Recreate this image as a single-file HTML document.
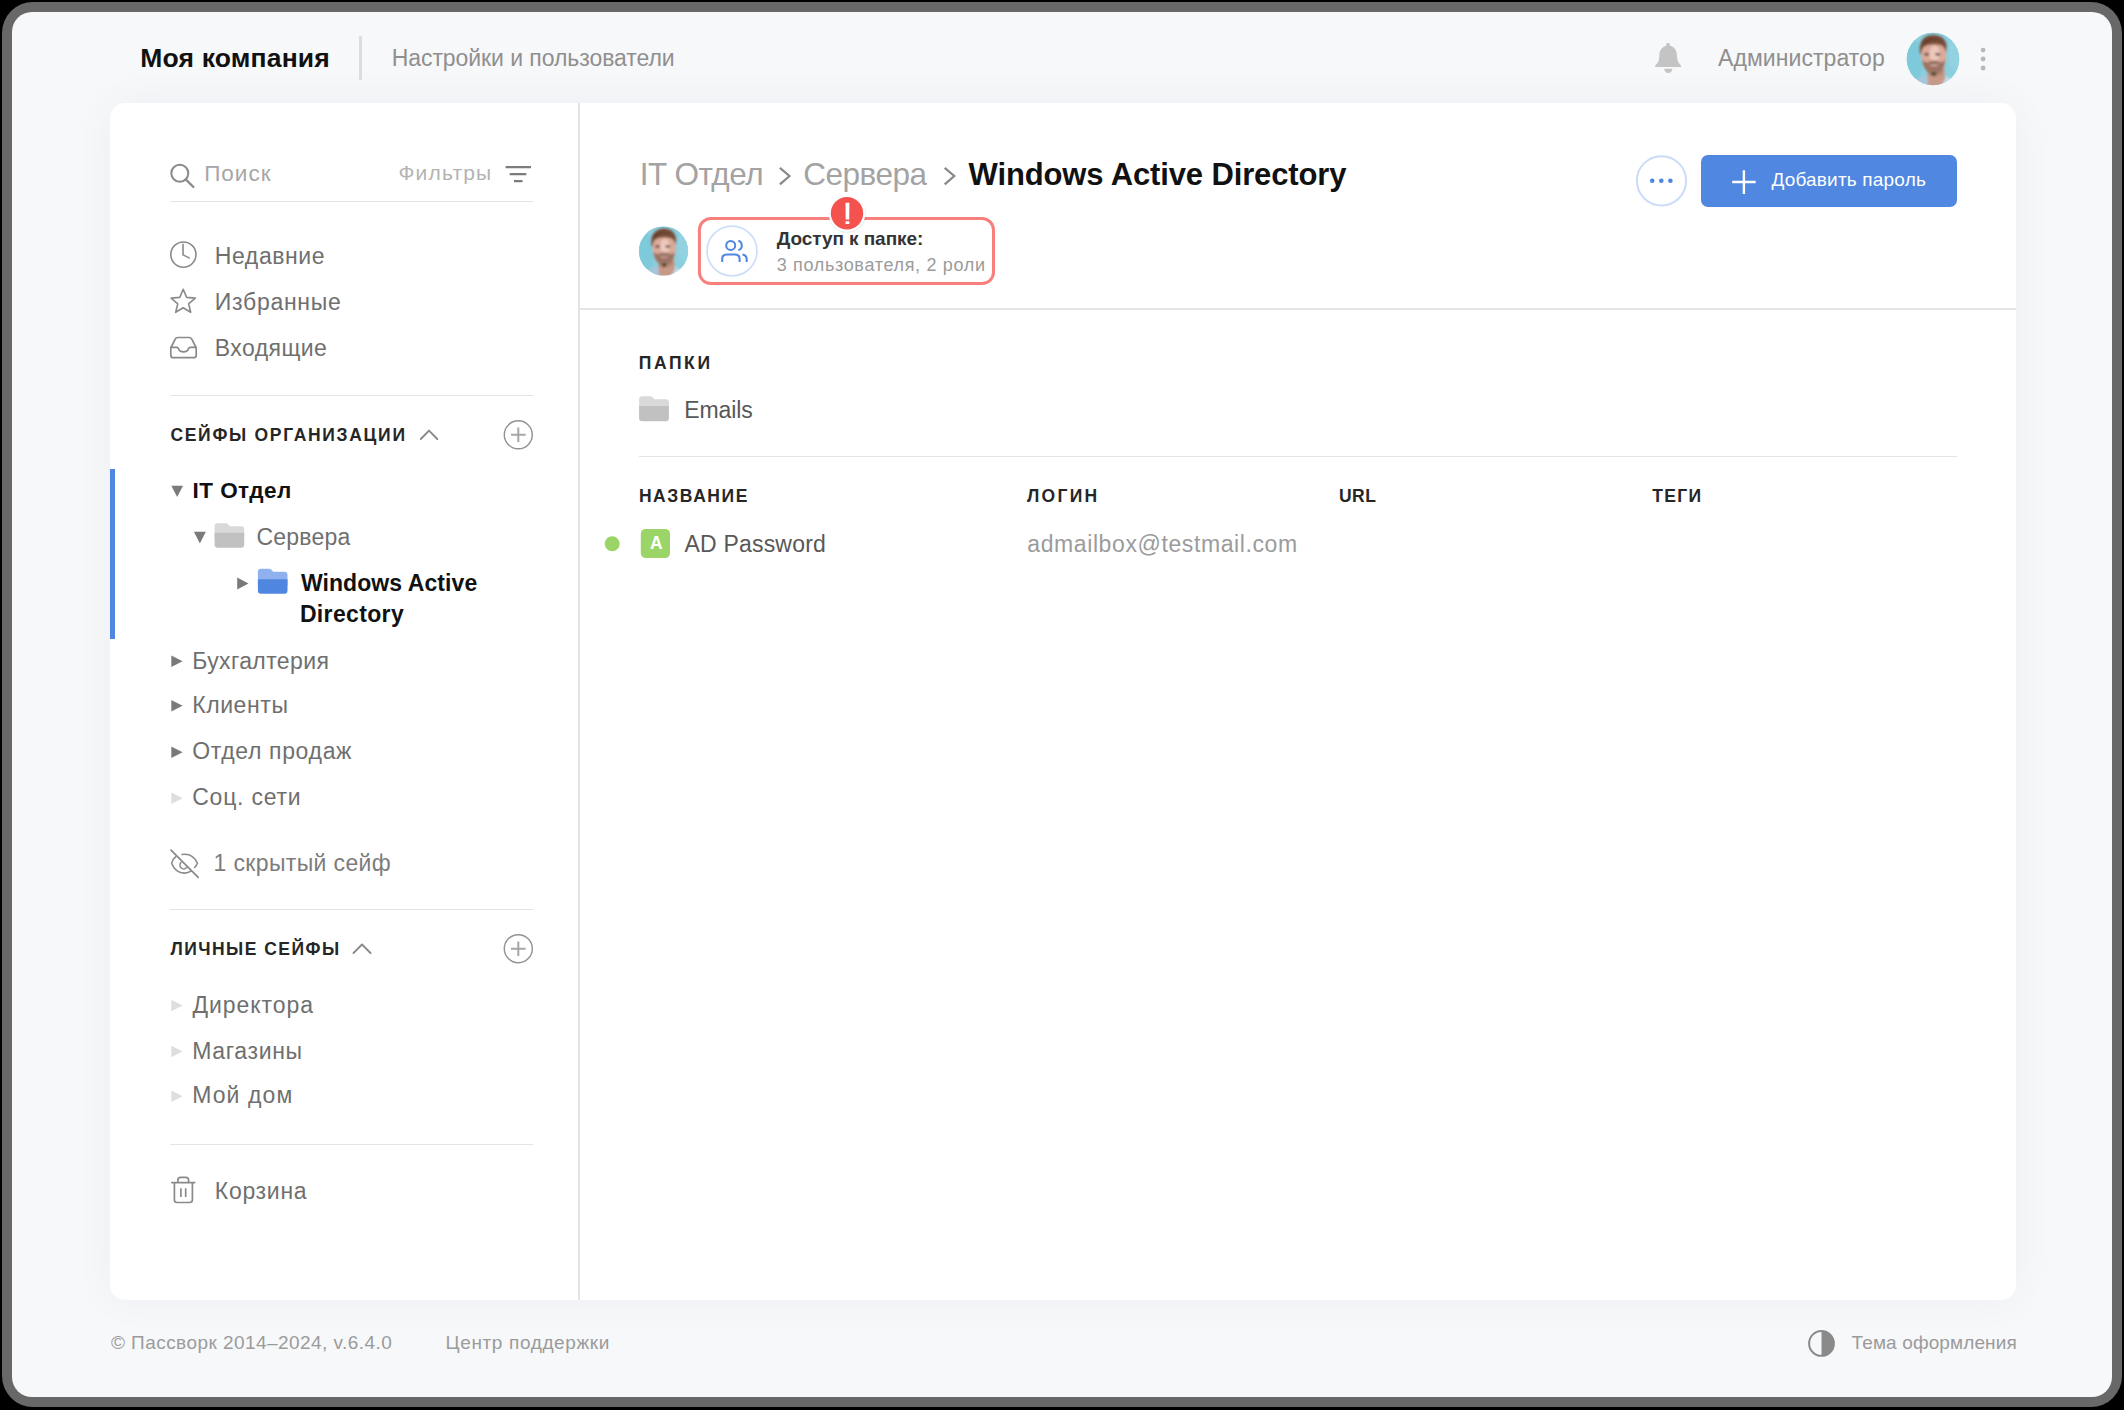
<!DOCTYPE html>
<html lang="ru">
<head>
<meta charset="utf-8">
<title>Пассворк</title>
<style>
*{box-sizing:border-box;margin:0;padding:0}
html,body{width:2124px;height:1410px;overflow:hidden;background:#000}
body{font-family:"Liberation Sans",sans-serif;position:relative;color:#111}
.abs{position:absolute;white-space:nowrap;line-height:1}
#frame{position:absolute;left:2px;top:2px;width:2120px;height:1405px;background:#686868;border-radius:31px}
#screen{position:absolute;left:12px;top:12px;width:2100px;height:1385px;background:#f7f8fa;border-radius:20px}
#card{position:absolute;left:110px;top:103px;width:1906px;height:1197px;background:#fff;border-radius:15px;box-shadow:0 0 42px rgba(50,55,75,.045)}
.ln{position:absolute;background:#e4e4e5}
#ico{position:absolute;left:0;top:0;width:2124px;height:1410px;overflow:visible}
</style>
</head>
<body>
<div id="frame"></div>
<div id="screen"></div>
<div id="card"></div>

<!-- lines -->
<div class="ln" style="left:359px;top:36px;width:2.5px;height:44px;background:#dddde0"></div>
<div class="ln" style="left:578.2px;top:103px;width:1.6px;height:1197px"></div>
<div class="ln" style="left:579px;top:308.3px;width:1437px;height:1.7px"></div>
<div class="ln" style="left:170px;top:200.8px;width:363px;height:1.5px"></div>
<div class="ln" style="left:170px;top:394.8px;width:363px;height:1.5px"></div>
<div class="ln" style="left:170px;top:908.8px;width:363px;height:1.5px"></div>
<div class="ln" style="left:170px;top:1143.6px;width:363px;height:1.5px"></div>
<div class="ln" style="left:639px;top:455.7px;width:1318.3px;height:1.5px"></div>
<div class="ln" style="left:110px;top:469.3px;width:4.8px;height:169.5px;background:#4f86e0"></div>

<svg id="ico" viewBox="0 0 2124 1410">
<defs>
  <clipPath id="avc"><circle cx="50" cy="50" r="50"/></clipPath>
  <filter id="avb" x="-10%" y="-10%" width="120%" height="120%"><feGaussianBlur stdDeviation="1.800"/></filter>
  </defs>

<!-- header icons -->
<path fill="#c4c4c4" d="M1668.100 43C1666.900 43 1666.200 43.900 1666.200 45V45.700C1662 46.800 1659.400 50.300 1659.400 54.800L1659 59C1658.600 62 1657 64 1655.200 65.600V66.900H1681.100V65.600C1679.300 64 1677.700 62 1677.300 59L1676.900 54.800C1676.900 50.300 1674.300 46.800 1670.100 45.700V45C1670.100 43.900 1669.300 43 1668.100 43Z"/>
<path fill="#c4c4c4" d="M1664.200 68.800H1672.400A4.100 4.200 0 0 1 1664.200 68.800Z"/>
<g transform="translate(1906.700 32.700) scale(.526)"><g clip-path="url(#avc)">
    <rect width="100" height="100" fill="#8bcfde"/>
    <g filter="url(#avb)">
    <rect x="-10" y="-10" width="120" height="120" fill="#8bcfde"/>
    <ellipse cx="12" cy="55" rx="18" ry="42" fill="#7ecadb"/>
    <ellipse cx="92" cy="40" rx="14" ry="30" fill="#93d2e0"/>
    <path d="M10 106L20 88Q30 80 42 84L43 106Z" fill="#a7c5db"/>
    <path d="M60 106L66 83Q78 81 86 92L92 106Z" fill="#c8ddec"/>
    <path d="M39 66H72L73 88Q68 99 62 106H41Z" fill="#c89986"/>
    <path d="M40 80Q52 90 70 78L71 70H40Z" fill="#b98a78"/>
    <path d="M27 30Q27 19 50 18Q74 19 75 31V50Q74 66 63 76Q52 84 43 77Q30 68 28 50Z" fill="#dba998"/>
    <ellipse cx="53" cy="40" rx="10" ry="15" fill="#ecccbf" opacity=".9"/>
    <path d="M25 40Q21 14 38 6Q52 0 66 7Q80 15 75 38Q73 27 65 24Q50 19 36 25Q28 29 27 42Z" fill="#7a4f38"/>
    <path d="M31 19Q50 3 71 18Q58 11 47 14Q38 16 31 24Z" fill="#553423"/>
    <path d="M29 52Q31 70 43 78Q52 85 63 76Q73 67 73 52Q69 58 62 55Q52 51 42 55Q34 58 29 52Z" fill="#9a7563"/>
    <path d="M39 61Q52 72 65 60Q52 66 39 61Z" fill="#b0605f"/>
    <path d="M42 61Q52 66 62 60.500Q52 63 42 61Z" fill="#f2e6e2"/>
    <ellipse cx="51.500" cy="78.500" rx="4.500" ry="4" fill="#594433"/>
    <ellipse cx="38" cy="41" rx="5" ry="2.600" fill="#5f464e"/>
    <ellipse cx="59" cy="41" rx="5" ry="2.600" fill="#5f464e"/>
    </g>
  </g></g>
<g fill="#b8b8b8"><circle cx="1983.100" cy="50.100" r="2.400"/><circle cx="1983.100" cy="59" r="2.400"/><circle cx="1983.100" cy="68" r="2.400"/></g>

<!-- sidebar icons -->
<g fill="none" stroke="#8a8a8a" stroke-width="1.800" stroke-linecap="round" stroke-linejoin="round">
  <circle cx="179.800" cy="173.200" r="8.500" stroke-width="2"/>
  <path d="M186 179.600L193.400 187" stroke-width="2.300"/>
  <g stroke="#7c7c7c" stroke-width="2.200" stroke-linecap="butt"><path d="M505.600 167.200H531M509.700 174.200H526.300M514 181.200H522.500"/></g>
  <!-- clock -->
  <circle cx="183.400" cy="254.600" r="12.600" stroke-width="1.600"/>
  <path d="M183 244.300V254.900L189.200 257.900" stroke-width="1.600"/>
  <!-- star -->
  <path stroke-width="1.600" d="M183.2 289.3 186.6 297.4 195.3 298.1 188.6 303.8 190.7 312.3 183.2 307.7 175.7 312.3 177.8 303.8 171.1 298.1 179.8 297.4Z"/>
  <!-- inbox -->
  <path stroke-width="1.700" d="M170.800 348L175.200 339.200Q176 337.500 177.800 337.500H189.200Q191 337.500 191.800 339.200L196.200 348V355.200Q196.200 357.700 193.700 357.700H173.300Q170.800 357.700 170.800 355.200Z"/>
  <path stroke-width="1.700" d="M170.800 347.300H176.800Q178 347.300 178.400 348.600Q179.400 351.900 183.500 351.900Q187.600 351.900 188.600 348.600Q189 347.300 190.200 347.300H196.200"/>
  <!-- section chevrons -->
  <path d="M420.800 439L429 430.600 437.300 439" stroke-width="1.900"/>
  <path d="M353.500 953L362 944.500 370.500 953" stroke-width="1.900"/>
  <!-- plus circles -->
  <circle cx="518.300" cy="434.800" r="14" stroke-width="1.400" stroke="#929292"/>
  <path d="M511 434.800H525.600M518.300 427.500V442.100" stroke-width="2" stroke="#a6a6a6" stroke-linecap="butt"/>
  <circle cx="518.300" cy="948.700" r="14" stroke-width="1.400" stroke="#929292"/>
  <path d="M511 948.700H525.600M518.300 941.400V956" stroke-width="2" stroke="#a6a6a6" stroke-linecap="butt"/>
  <!-- eye slash -->
  <path stroke-width="1.600" d="M175.800 856.700C173.500 858.500 172 860.800 171.600 863.300C174 869.500 178.800 873.100 184.500 873.100C187 873.100 189.300 872.300 191.300 870.800"/>
  <path stroke-width="1.600" d="M182.100 854.500C183 854.300 183.900 854.200 184.800 854.200C190.500 854.200 195.200 858 197.400 863.300C196.800 864.900 195.800 866.300 194.600 867.500"/>
  <path stroke-width="1.600" d="M180.900 862.600A3.500 3.500 0 0 0 186.700 867.600"/>
  <path d="M171 850.100L198.200 877.300" stroke-width="1.700"/>
  <!-- trash -->
  <path stroke-width="1.700" d="M171.800 1182.600H194.700M177.900 1182.600V1180.200Q177.900 1177.400 180.700 1177.400H185.800Q188.600 1177.400 188.600 1180.200V1182.600M174.400 1182.600V1199.800Q174.400 1202.500 177.100 1202.500H189.700Q192.400 1202.500 192.400 1199.800V1182.600"/>
  <path stroke-width="1.700" stroke-linecap="butt" d="M180.900 1188.300V1196.900M185.700 1188.300V1196.900" stroke-linecap="round"/>
  <!-- breadcrumb chevrons -->
  <path d="M779.900 167.800L789.400 176 779.900 184.300" stroke-width="2.300" stroke-linecap="butt" stroke-linejoin="miter"/>
  <path d="M944.700 167.800L954.200 176 944.700 184.300" stroke-width="2.300" stroke-linecap="butt" stroke-linejoin="miter"/>
</g>

<!-- triangles -->
<g fill="#7a7a7a">
  <path d="M171.300 485.700H183L177.200 497Z"/>
  <path d="M193.900 531.700H205.800L199.900 543.500Z"/>
  <path d="M237.200 577.400L248.500 583.400 237.200 589.500Z"/>
  <path d="M171.300 655.500L182.600 661.200 171.300 666.900Z"/>
  <path d="M171.300 700L182.600 705.700 171.300 711.400Z"/>
  <path d="M171.300 746.600L182.600 752.300 171.300 758Z"/>
</g>
<g fill="#dedede">
  <path d="M171.300 792.500L182.600 798.200 171.300 803.900Z"/>
  <path d="M171.300 999.800L182.600 1005.500 171.300 1011.200Z"/>
  <path d="M171.300 1045.800L182.600 1051.500 171.300 1057.200Z"/>
  <path d="M171.300 1090.600L182.600 1096.300 171.300 1102Z"/>
</g>

<!-- folders -->
<g id="fold_gray1">
  <path fill="#d9d9d9" d="M214.600 526.200Q214.600 523.200 217.600 523.200H225.600Q227.300 523.200 228.300 524.400L229.900 526.200H241.200Q244.200 526.200 244.200 529.200V540H214.600Z"/>
  <path fill="#c1c1c1" d="M214.600 532.700H244.200V544.700Q244.200 547.700 241.200 547.700H217.600Q214.600 547.700 214.600 544.700Z"/>
</g>
<g id="fold_blue">
  <path fill="#8fb2ef" d="M257.900 571.800Q257.900 568.800 260.900 568.800H268.900Q270.600 568.800 271.600 570L273.200 571.800H284.500Q287.500 571.800 287.500 574.800V586H257.900Z"/>
  <path fill="#4f86e0" d="M257.900 579.300H287.500V590.800Q287.500 593.800 284.500 593.800H260.900Q257.900 593.800 257.900 590.800Z"/>
</g>
<g id="fold_gray2">
  <path fill="#d9d9d9" d="M639.100 399.300Q639.100 396.300 642.100 396.300H650.100Q651.800 396.300 652.800 397.500L654.400 399.300H665.900Q668.900 399.300 668.900 402.300V414H639.100Z"/>
  <path fill="#c1c1c1" d="M639.100 406H668.900V418.200Q668.900 421.200 665.900 421.200H642.100Q639.100 421.200 639.100 418.200Z"/>
</g>

<!-- main: actions -->
<circle cx="1661.500" cy="180.800" r="24.600" fill="#fff" stroke="#c9dcf8" stroke-width="2"/>
<g fill="#4f86e0"><circle cx="1652.200" cy="180.800" r="2.300"/><circle cx="1661.300" cy="180.800" r="2.300"/><circle cx="1670.400" cy="180.800" r="2.300"/></g>
<rect x="1701" y="155" width="256" height="52" rx="7" fill="#4f87e1"/>
<path d="M1732.200 182H1755.600M1743.900 170.200V193.900" stroke="#fff" stroke-width="2.400" fill="none"/>

<!-- access -->
<g transform="translate(639 226.500) scale(.49)"><g clip-path="url(#avc)">
    <rect width="100" height="100" fill="#8bcfde"/>
    <g filter="url(#avb)">
    <rect x="-10" y="-10" width="120" height="120" fill="#8bcfde"/>
    <ellipse cx="12" cy="55" rx="18" ry="42" fill="#7ecadb"/>
    <ellipse cx="92" cy="40" rx="14" ry="30" fill="#93d2e0"/>
    <path d="M10 106L20 88Q30 80 42 84L43 106Z" fill="#a7c5db"/>
    <path d="M60 106L66 83Q78 81 86 92L92 106Z" fill="#c8ddec"/>
    <path d="M39 66H72L73 88Q68 99 62 106H41Z" fill="#c89986"/>
    <path d="M40 80Q52 90 70 78L71 70H40Z" fill="#b98a78"/>
    <path d="M27 30Q27 19 50 18Q74 19 75 31V50Q74 66 63 76Q52 84 43 77Q30 68 28 50Z" fill="#dba998"/>
    <ellipse cx="53" cy="40" rx="10" ry="15" fill="#ecccbf" opacity=".9"/>
    <path d="M25 40Q21 14 38 6Q52 0 66 7Q80 15 75 38Q73 27 65 24Q50 19 36 25Q28 29 27 42Z" fill="#7a4f38"/>
    <path d="M31 19Q50 3 71 18Q58 11 47 14Q38 16 31 24Z" fill="#553423"/>
    <path d="M29 52Q31 70 43 78Q52 85 63 76Q73 67 73 52Q69 58 62 55Q52 51 42 55Q34 58 29 52Z" fill="#9a7563"/>
    <path d="M39 61Q52 72 65 60Q52 66 39 61Z" fill="#b0605f"/>
    <path d="M42 61Q52 66 62 60.500Q52 63 42 61Z" fill="#f2e6e2"/>
    <ellipse cx="51.500" cy="78.500" rx="4.500" ry="4" fill="#594433"/>
    <ellipse cx="38" cy="41" rx="5" ry="2.600" fill="#5f464e"/>
    <ellipse cx="59" cy="41" rx="5" ry="2.600" fill="#5f464e"/>
    </g>
  </g></g>
<rect x="699.400" y="218.500" width="294.100" height="65.100" rx="11.500" fill="#fff" stroke="#f7807d" stroke-width="3"/>
<circle cx="732" cy="250.950" r="24.900" fill="#fff" stroke="#cddff8" stroke-width="1.700"/>
<g fill="none" stroke="#4f86e0" stroke-width="2" stroke-linecap="butt">
  <circle cx="730.700" cy="245.400" r="4.500"/>
  <path d="M722.200 262V259Q722.200 254.400 726.800 254.400H735Q739.600 254.400 739.600 259V262"/>
  <path d="M738.300 240.700A4.900 4.900 0 0 1 738.300 250.100"/>
  <path d="M742.500 254.500Q746.700 255.200 746.700 259.500V262"/>
</g>
<circle cx="847.300" cy="214.200" r="18.800" fill="#000" opacity=".07"/>
<circle cx="847" cy="213.300" r="18.400" fill="#fff"/>
<circle cx="847" cy="213.300" r="16.200" fill="#f4524e"/>
<path fill="#fff" d="M845.500 202.800h3.900l-.2 16.600h-3.500zM845.500 221.300h3.900v2.800h-3.900z"/>

<!-- table -->
<circle cx="612.200" cy="543.800" r="7.500" fill="#9bd567"/>
<rect x="640.800" y="528.900" width="29.200" height="29.200" rx="5" fill="#9bd567"/>

<!-- footer -->
<circle cx="1821.500" cy="1343.400" r="12.400" fill="none" stroke="#8a8a8a" stroke-width="2"/>
<path fill="#8a8a8a" d="M1821.500 1331A12.400 12.400 0 0 1 1821.500 1355.800Z"/>
</svg>

<div class="abs" id="h_company" style="left:140.30px;top:45px;font-size:26.5px;color:#111;letter-spacing:0.170px;font-weight:bold;">Моя компания</div>
<div class="abs" id="h_settings" style="left:391.70px;top:47px;font-size:23px;color:#8f8f8f;letter-spacing:-0.065px;">Настройки и пользователи</div>
<div class="abs" id="h_admin" style="left:1718.10px;top:47px;font-size:23px;color:#8f8f8f;letter-spacing:0.054px;">Администратор</div>
<div class="abs" id="s_search" style="left:204.20px;top:163px;font-size:22.5px;color:#a6a6a6;letter-spacing:0.999px;">Поиск</div>
<div class="abs" id="s_filters" style="left:398.50px;top:162px;font-size:21px;color:#b3b3b3;letter-spacing:1.159px;">Фильтры</div>
<div class="abs" id="s_recent" style="left:214.80px;top:245px;font-size:23px;color:#6f6f6f;letter-spacing:0.589px;">Недавние</div>
<div class="abs" id="s_fav" style="left:214.80px;top:291px;font-size:23px;color:#6f6f6f;letter-spacing:0.711px;">Избранные</div>
<div class="abs" id="s_inbox" style="left:214.80px;top:337px;font-size:23px;color:#6f6f6f;letter-spacing:0.421px;">Входящие</div>
<div class="abs" id="s_org" style="left:170.40px;top:427px;font-size:17.5px;color:#262626;letter-spacing:1.704px;font-weight:bold;">СЕЙФЫ ОРГАНИЗАЦИИ</div>
<div class="abs" id="s_it" style="left:192.50px;top:480px;font-size:22.5px;color:#111;letter-spacing:0.462px;font-weight:bold;">IT Отдел</div>
<div class="abs" id="s_srv" style="left:256.40px;top:526px;font-size:23px;color:#6f6f6f;letter-spacing:0.244px;">Сервера</div>
<div class="abs" id="s_wa" style="left:300.90px;top:572px;font-size:23px;color:#111;letter-spacing:0.080px;font-weight:bold;">Windows Active</div>
<div class="abs" id="s_dir" style="left:299.90px;top:603px;font-size:23px;color:#111;letter-spacing:0.351px;font-weight:bold;">Directory</div>
<div class="abs" id="s_buh" style="left:192.20px;top:650px;font-size:23px;color:#6f6f6f;letter-spacing:0.381px;">Бухгалтерия</div>
<div class="abs" id="s_cli" style="left:192.20px;top:694px;font-size:23px;color:#6f6f6f;letter-spacing:0.584px;">Клиенты</div>
<div class="abs" id="s_sales" style="left:192.20px;top:740px;font-size:23px;color:#6f6f6f;letter-spacing:0.658px;">Отдел продаж</div>
<div class="abs" id="s_soc" style="left:192.20px;top:786px;font-size:23px;color:#6f6f6f;letter-spacing:0.773px;">Соц. сети</div>
<div class="abs" id="s_hidden" style="left:213.60px;top:852px;font-size:23px;color:#7c7c7c;letter-spacing:0.361px;">1 скрытый сейф</div>
<div class="abs" id="s_pers" style="left:170.40px;top:941px;font-size:17.5px;color:#262626;letter-spacing:1.483px;font-weight:bold;">ЛИЧНЫЕ СЕЙФЫ</div>
<div class="abs" id="s_dirs" style="left:192.40px;top:994px;font-size:23px;color:#6f6f6f;letter-spacing:0.952px;">Директора</div>
<div class="abs" id="s_shops" style="left:192.20px;top:1040px;font-size:23px;color:#6f6f6f;letter-spacing:0.654px;">Магазины</div>
<div class="abs" id="s_home" style="left:192.20px;top:1084px;font-size:23px;color:#6f6f6f;letter-spacing:1.090px;">Мой дом</div>
<div class="abs" id="s_trash" style="left:214.80px;top:1180px;font-size:23px;color:#6f6f6f;letter-spacing:0.697px;">Корзина</div>
<div class="abs" id="m_bc1" style="left:639.70px;top:159px;font-size:31.5px;color:#a3a3a3;letter-spacing:-0.483px;">IT Отдел</div>
<div class="abs" id="m_bc2" style="left:803.20px;top:159px;font-size:31.5px;color:#a3a3a3;letter-spacing:-0.484px;">Сервера</div>
<div class="abs" id="m_bc3" style="left:968.60px;top:159px;font-size:31px;color:#111;letter-spacing:-0.135px;font-weight:bold;">Windows Active Directory</div>
<div class="abs" id="m_add" style="left:1771.40px;top:170px;font-size:19px;color:#fff;letter-spacing:0.192px;">Добавить пароль</div>
<div class="abs" id="m_acc1" style="left:776.70px;top:229px;font-size:19px;color:#333;letter-spacing:-0.062px;font-weight:bold;">Доступ к папке:</div>
<div class="abs" id="m_acc2" style="left:776.70px;top:256px;font-size:18px;color:#9b9b9b;letter-spacing:0.670px;">3 пользователя, 2 роли</div>
<div class="abs" id="m_folders" style="left:638.70px;top:355px;font-size:17.5px;color:#262626;letter-spacing:2.614px;font-weight:bold;">ПАПКИ</div>
<div class="abs" id="m_emails" style="left:684.30px;top:399px;font-size:23px;color:#585858;letter-spacing:-0.102px;">Emails</div>
<div class="abs" id="m_th1" style="left:638.90px;top:488px;font-size:17.5px;color:#262626;letter-spacing:1.563px;font-weight:bold;">НАЗВАНИЕ</div>
<div class="abs" id="m_th2" style="left:1026.90px;top:488px;font-size:17.5px;color:#262626;letter-spacing:2.328px;font-weight:bold;">ЛОГИН</div>
<div class="abs" id="m_th3" style="left:1338.90px;top:488px;font-size:17.5px;color:#262626;letter-spacing:0.562px;font-weight:bold;">URL</div>
<div class="abs" id="m_th4" style="left:1652.20px;top:488px;font-size:17.5px;color:#262626;letter-spacing:1.306px;font-weight:bold;">ТЕГИ</div>
<div class="abs" id="m_A" style="left:649.90px;top:535px;font-size:17.5px;color:#fff;font-weight:bold;">A</div>
<div class="abs" id="m_adpw" style="left:684.50px;top:533px;font-size:23px;color:#585858;letter-spacing:0.197px;">AD Password</div>
<div class="abs" id="m_login" style="left:1027.30px;top:533px;font-size:23px;color:#9b9b9b;letter-spacing:0.595px;">admailbox@testmail.com</div>
<div class="abs" id="f_copy" style="left:110.90px;top:1333px;font-size:19px;color:#9b9b9b;letter-spacing:0.449px;">© Пассворк 2014–2024, v.6.4.0</div>
<div class="abs" id="f_support" style="left:445.50px;top:1333px;font-size:19px;color:#9b9b9b;letter-spacing:0.634px;">Центр поддержки</div>
<div class="abs" id="f_theme" style="left:1851.60px;top:1333px;font-size:19px;color:#9b9b9b;letter-spacing:0.117px;">Тема оформления</div>

</body>
</html>
